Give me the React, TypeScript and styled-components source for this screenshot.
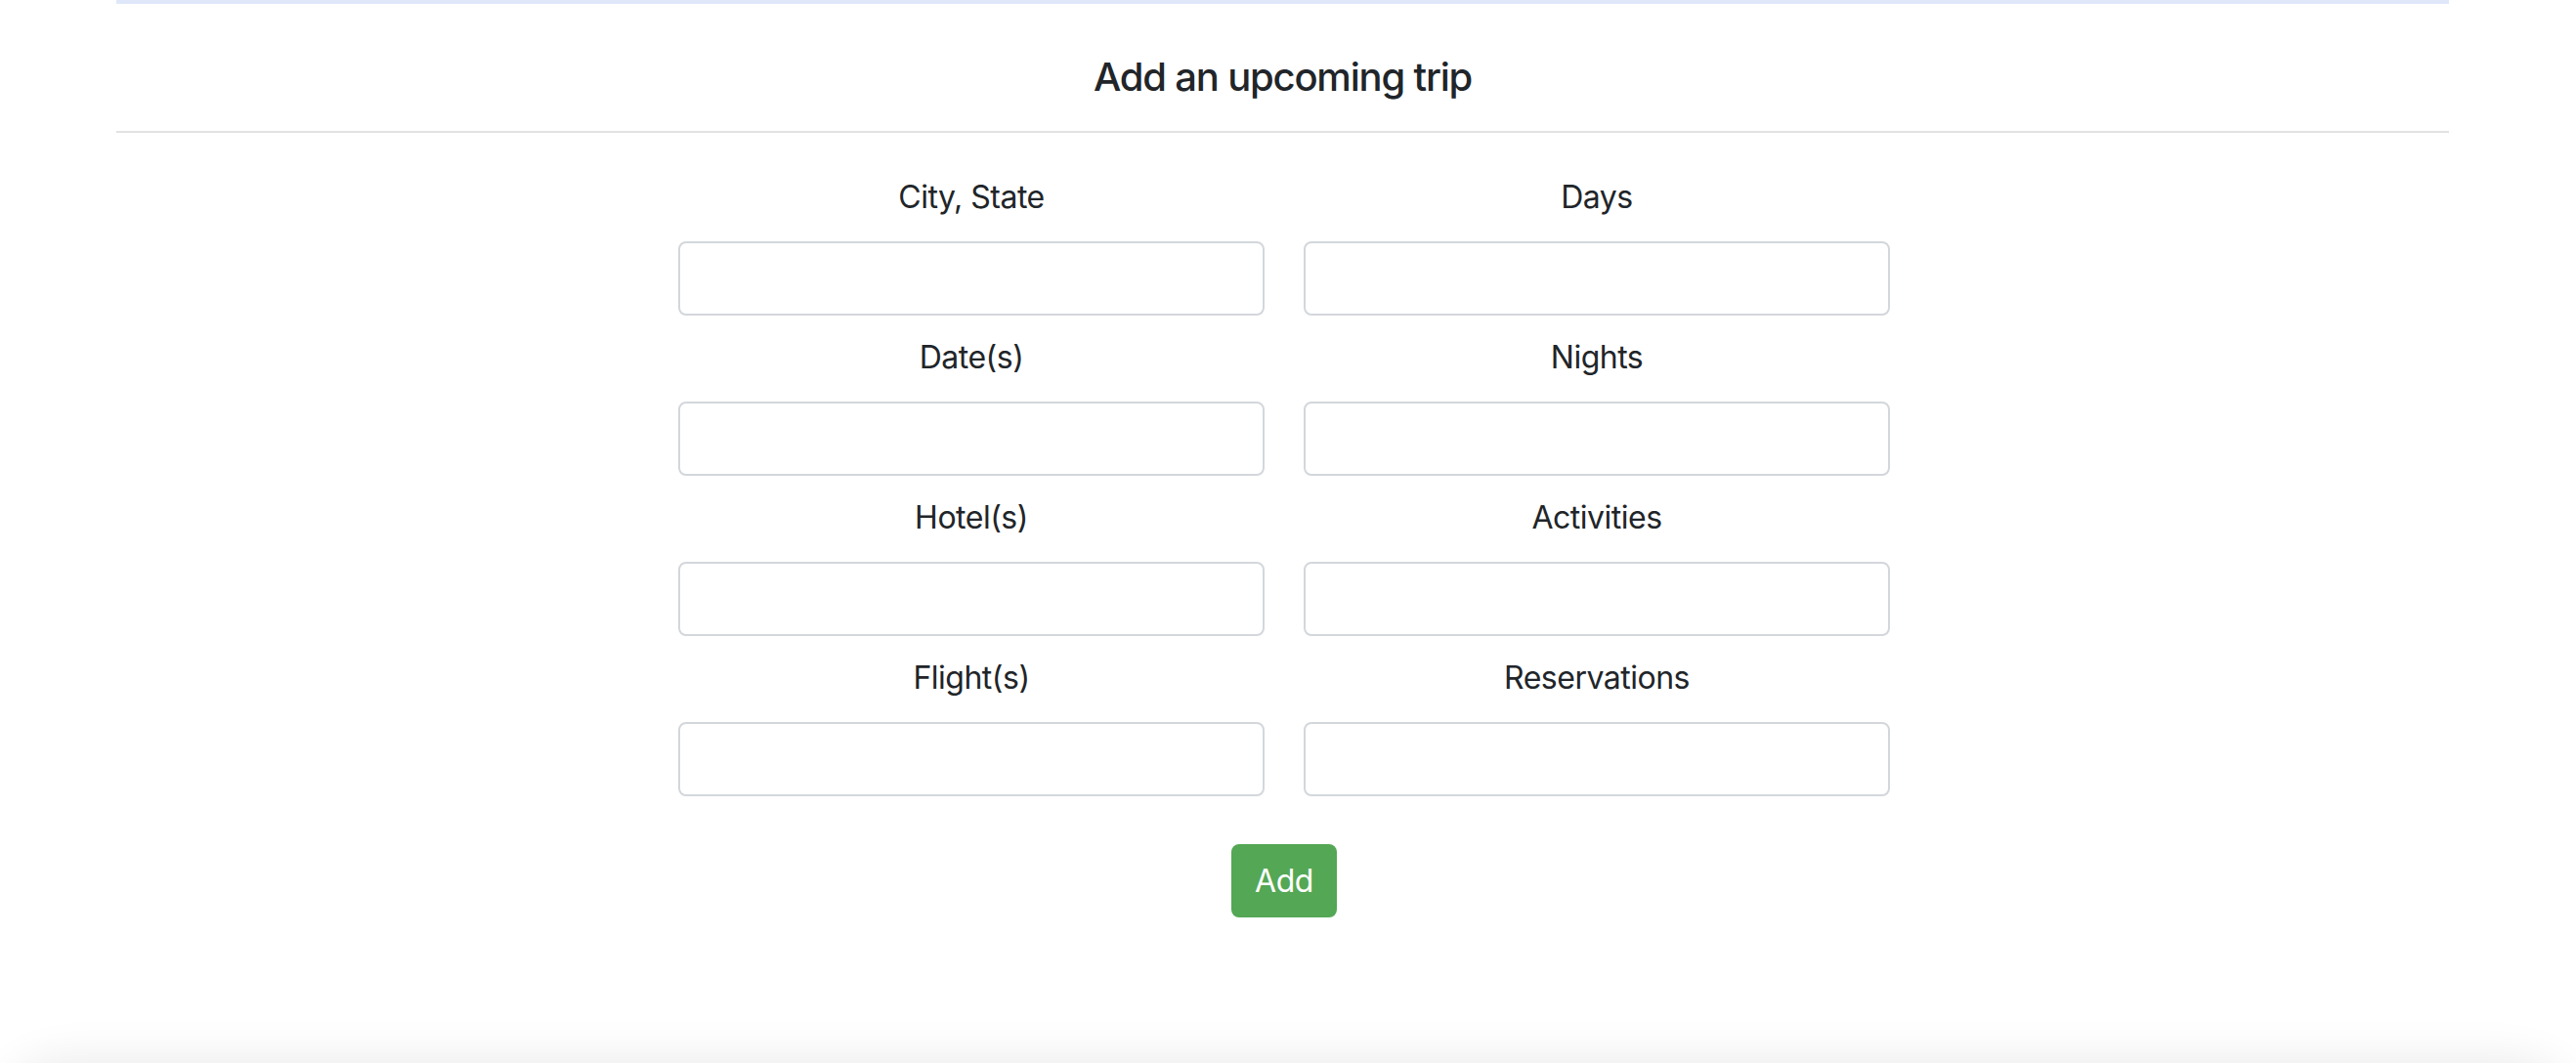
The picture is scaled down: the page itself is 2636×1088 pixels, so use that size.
import React from "react";
import styled, { createGlobalStyle } from "styled-components";

const GlobalStyle = createGlobalStyle`
  html, body {
    margin: 0;
    padding: 0;
    background: #ffffff;
    overflow: hidden;
  }
  body {
    font-family: Inter, "Liberation Sans", Arial, sans-serif;
    color: #212529;
  }
  * { box-sizing: border-box; }
`;

const Page = styled.div`
  width: 2636px;
  height: 1088px;
  display: flex;
  flex-direction: column;
  overflow: hidden;
`;

const Section = styled.section`
  margin: 0 130px 0 119px;
  border-top: 4px solid #dfe8fa;
  display: flex;
  flex-direction: column;
`;

const Title = styled.h5`
  margin: 51px 0 0;
  font-size: 40px;
  line-height: 48px;
  font-weight: 500;
  letter-spacing: -1.2px;
  text-align: center;
  color: #212529;
`;

const Divider = styled.hr`
  margin: 31px 0 0;
  border: 0;
  border-top: 2px solid #e2e2e2;
  height: 0;
`;

const Form = styled.form`
  margin-top: 42px;
  display: flex;
  flex-direction: column;
  align-items: center;
  padding-left: 3px;
`;

const FieldGrid = styled.div`
  display: grid;
  grid-template-columns: 600px 600px;
  column-gap: 40px;
`;

const Field = styled.div`
  display: flex;
  flex-direction: column;
  align-items: stretch;
  margin-bottom: 19px;
`;

const Label = styled.label`
  font-size: 32px;
  line-height: 48px;
  font-weight: 400;
  letter-spacing: -0.5px;
  text-align: center;
  margin-bottom: 21px;
  color: #212529;
`;

const Input = styled.input`
  height: 76px;
  width: 100%;
  padding: 12px 24px;
  font-size: 32px;
  font-family: inherit;
  border: 2px solid #d3d7dc;
  border-radius: 8px;
  background: #ffffff;
  outline: none;
`;

const AddButton = styled.button`
  margin-top: 30px;
  height: 75px;
  padding: 0 22px;
  font-family: inherit;
  font-size: 32px;
  font-weight: 400;
  letter-spacing: -0.5px;
  color: #ffffff;
  background: #54a754;
  border: 2px solid #54a754;
  border-radius: 8px;
  cursor: pointer;
`;

const ShadowWindow = styled.div`
  margin-top: auto;
  height: 56px;
  overflow: hidden;
  flex-shrink: 0;
`;

const NextCard = styled.div`
  margin: 60px 6px 0;
  height: 200px;
  border-radius: 60px;
  background: #ffffff;
  box-shadow: 0 0 48px 6px rgba(0, 0, 0, 0.09);
`;

const fields: [string, string][] = [
  ["City, State", "Days"],
  ["Date(s)", "Nights"],
  ["Hotel(s)", "Activities"],
  ["Flight(s)", "Reservations"],
];

export default function App() {
  return (
    <Page>
      <GlobalStyle />
      <Section>
        <Title>Add an upcoming trip</Title>
        <Divider />
        <Form onSubmit={(e) => e.preventDefault()}>
          <FieldGrid>
            {fields.flat().map((name) => (
              <Field key={name}>
                <Label>{name}</Label>
                <Input type="text" aria-label={name} />
              </Field>
            ))}
          </FieldGrid>
          <AddButton type="submit">Add</AddButton>
        </Form>
      </Section>
      <ShadowWindow>
        <NextCard />
      </ShadowWindow>
    </Page>
  );
}
